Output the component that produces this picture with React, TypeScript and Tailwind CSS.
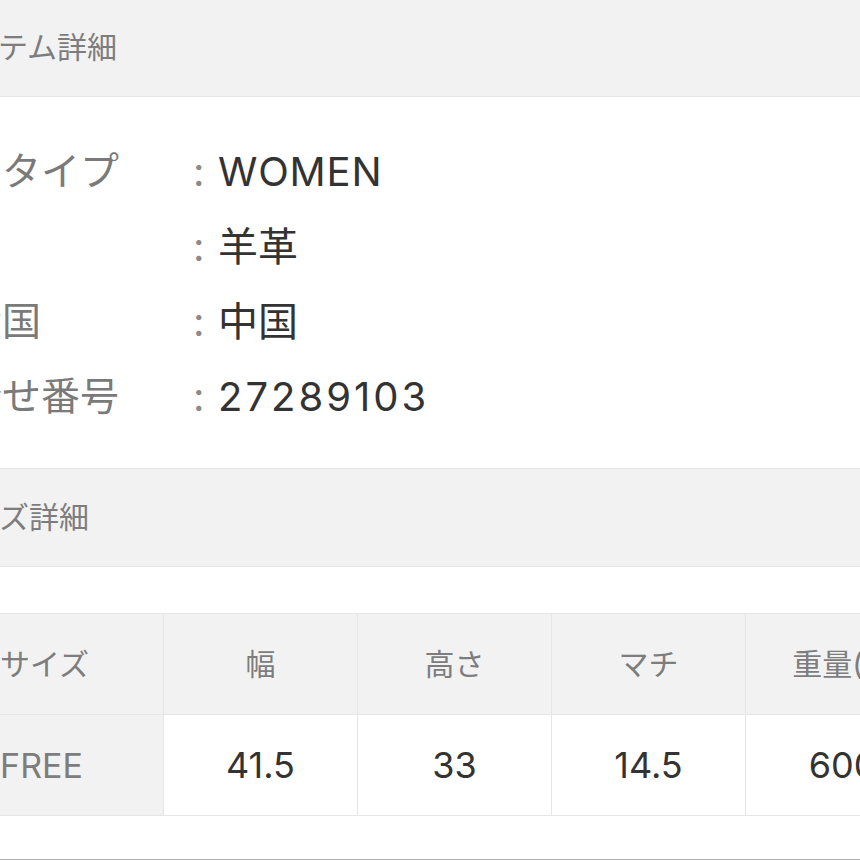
import React from 'react';

const font = "font-['Inter','Noto_Sans_CJK_JP',sans-serif]";

const info = [
  { label: '性別タイプ', value: 'WOMEN', track: 'tracking-[0.8px]' },
  { label: '素材', value: '羊革', hideLabel: true, track: '' },
  { label: '原産国', value: '中国', track: '' },
  { label: '問合せ番号', value: '27289103', track: 'tracking-[3px]' },
];

const cols = ['幅', '高さ', 'マチ', '重量(g)'];
const vals = ['41.5', '33', '14.5', '600'];

function SectionHeader({ title }: { title: string }) {
  return (
    <div className="flex h-[99px] items-center border-y border-[#e6e6e6] bg-[#f2f2f2] pl-[15px] text-[30px] text-[#7d7d7d]">
      {title}
    </div>
  );
}

export default function App() {
  return (
    <div className={`h-[860px] w-[860px] overflow-hidden bg-white ${font}`}>
      <div className="-ml-[75px] w-[1120px]">
        <div className="-mt-[2px]">
          <SectionHeader title="アイテム詳細" />
        </div>

        <div className="flex flex-col pt-[37px] pb-[34px]">
          {info.map((row) => (
            <div key={row.value} className="flex h-[75px] items-center">
              <div className="-ml-[1px] w-[269px] text-[39px] text-[#7a7a7a]">
                {row.hideLabel ? <span className="invisible">{row.label}</span> : row.label}
              </div>
              <div className="w-[25px] text-[40px] text-[#8a8a8a]">:</div>
              <div className={`text-[40px] text-[#333] ${row.track}`}>{row.value}</div>
            </div>
          ))}
        </div>

        <SectionHeader title="サイズ詳細" />

        <div className="pt-[46px]">
          <table className="border-collapse text-center">
            <thead>
              <tr className="h-[101px]">
                <th className="w-[238px] border border-[#e6e6e6] bg-[#f2f2f2] text-[30px] font-normal text-[#7d7d7d]">
                  サイズ
                </th>
                {cols.map((c) => (
                  <th
                    key={c}
                    className="w-[194px] border border-[#e6e6e6] bg-[#f2f2f2] text-[30px] font-normal text-[#7d7d7d]"
                  >
                    {c}
                  </th>
                ))}
              </tr>
            </thead>
            <tbody>
              <tr className="h-[101px]">
                <td className="border border-[#e6e6e6] bg-[#f2f2f2] pr-[6px] text-[34px] text-[#7d7d7d]">FREE</td>
                {vals.map((v) => (
                  <td key={v} className="border border-[#e6e6e6] text-[36px] text-[#333]">
                    {v}
                  </td>
                ))}
              </tr>
            </tbody>
          </table>
        </div>

        <div className="mt-[43px] h-[2px] bg-[#b0b0b0]" />
      </div>
    </div>
  );
}
